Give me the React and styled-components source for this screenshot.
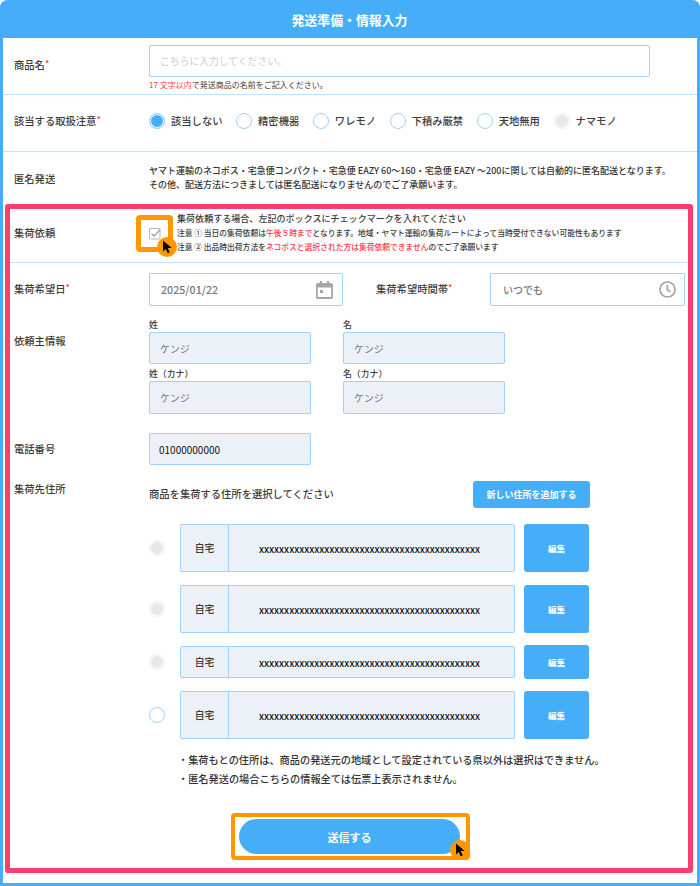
import React from "react";
import styled, { createGlobalStyle } from "styled-components";

const Global = createGlobalStyle`
  html, body { margin: 0; padding: 0; background: #fff; }
  body { font-family: "Noto Sans CJK JP", "Noto Sans", sans-serif; color: #3c3c3c; }
  * { box-sizing: border-box; }
`;

const BLUE = "#46aef9";
const LINE = "#bfe4ff";
const EDGE = "#9dd3fc";
const FILL = "#ecf1f8";
const RED = "#fb3b4e";

const Card = styled.form`
  width: 700px;
  height: 886px;
  margin: 0;
  border: 3px solid ${BLUE};
  border-top: 0;
  border-radius: 8px 8px 0 0;
  display: flex;
  flex-direction: column;
`;
const Header = styled.h1`
  margin: 0 -3px;
  height: 38px;
  flex: none;
  background: ${BLUE};
  border-radius: 8px 8px 0 0;
  color: #fff;
  font-size: 12.9px;
  font-weight: 700;
  display: flex;
  align-items: center;
  justify-content: center;
  padding-right: 1px;
`;
const Row = styled.div`
  display: grid;
  grid-template-columns: 146px 1fr;
  align-items: ${(p) => p.$align || "center"};
  height: ${(p) => p.$h}px;
  padding-top: ${(p) => p.$pt || 0}px;
  border-bottom: ${(p) => (p.$plain ? "0" : `1px solid ${LINE}`)};
  flex: none;
`;
const Label = styled.div`
  padding-left: 11px;
  font-size: 10.3px;
  font-weight: 500;
  line-height: 14px;
  padding-top: ${(p) => p.$top || 0}px;
  padding-bottom: ${(p) => p.$bottom || 0}px;
`;
const Req = styled.span`
  color: ${RED};
  font-size: 9px;
  vertical-align: 2px;
`;
const TextInput = styled.input`
  display: block;
  width: ${(p) => p.$w}px;
  height: ${(p) => p.$h}px;
  border: 1px solid ${EDGE};
  border-radius: 2px;
  background: ${(p) => (p.$fill ? FILL : "#fff")};
  padding: 0 ${(p) => p.$pad || 10}px;
  font: ${(p) => p.$weight || 400} ${(p) => p.$size || 10}px "Noto Sans CJK JP", "Noto Sans", sans-serif;
  color: ${(p) => p.$color || "#777"};
  outline: 0;
  &::placeholder { color: #c9ced3; opacity: 1; }
`;
const Hint = styled.p`
  margin: 2px 0 0;
  font-size: 8px;
  line-height: 12px;
  color: #3c3c3c;
`;
const Red = styled.span`
  color: ${RED};
`;
const Radios = styled.div`
  display: flex;
  gap: 13.6px;
  margin-top: -5px;
`;
const RadioItem = styled.label`
  display: flex;
  align-items: center;
  gap: 6px;
  font-size: 10.3px;
  font-weight: 500;
  line-height: 16px;
`;
const Dot = styled.span`
  display: block;
  flex: none;
  width: 16px;
  height: 16px;
  border-radius: 50%;
  border: 1px solid ${(p) => (p.$state === "off" ? "#f3f3f3" : EDGE)};
  background: ${(p) => (p.$state === "on" ? BLUE : p.$state === "off" ? "#e8e8e8" : "#fff")};
  box-shadow: ${(p) => (p.$state === "on" ? "inset 0 0 0 1px #fff" : p.$state === "off" ? "inset 0 0 0 1px #fbfbfb" : "none")};
`;
const Para = styled.p`
  margin: -1px 0 0;
  font-size: 9px;
  font-weight: 500;
  line-height: 14px;
  color: #333;
`;
const Pickup = styled.section`
  flex: none;
  margin: -1px 4px 0 2px;
  height: 669px;
  border: 5px solid #f93f6e;
  border-radius: 3px;
  display: flex;
  flex-direction: column;
`;
const PickupRow = styled(Row)`
  grid-template-columns: 139px 1fr;
  ${Label} { padding-left: 4px; }
`;
const CheckCell = styled.div`
  position: relative;
  height: 100%;
  padding-left: 28px;
  display: flex;
  flex-direction: column;
  justify-content: center;
`;
const Lead = styled.div`
  font-size: 9.05px;
  font-weight: 500;
  line-height: 14px;
  margin-top: -5px;
`;
const Fine = styled.div`
  font-size: 7.78px;
  font-weight: 500;
  line-height: 14px;
  white-space: nowrap;
`;
const CheckFrame = styled.div`
  position: absolute;
  left: -13px;
  top: 6px;
  width: 37px;
  height: 37px;
  border: 5px solid #ff9800;
  border-radius: 4px;
  display: flex;
  align-items: center;
  justify-content: center;
`;
const CursorBadge = styled.span`
  position: absolute;
  width: 20px;
  height: 20px;
  border-radius: 50%;
  background: #ff9800;
  right: ${(p) => p.$right}px;
  bottom: ${(p) => p.$bottom}px;
  display: flex;
  align-items: center;
  justify-content: center;
`;
const Form = styled.div`
  display: flex;
  flex-direction: column;
  flex: 1;
  min-height: 0;
`;
const Field = styled.div`
  display: grid;
  grid-template-columns: 139px 1fr;
  margin-top: ${(p) => p.$mt || 0}px;
  ${Label} { padding-left: 4px; }
`;
const DateRow = styled.div`
  display: flex;
  align-items: center;
`;
const InlineLabel = styled.div`
  width: 114px;
  margin-left: 33px;
  font-size: 10.3px;
  font-weight: 500;
  line-height: 14px;
  padding-bottom: 2px;
`;
const IconField = styled.div`
  position: relative;
  svg { position: absolute; top: 8px; right: ${(p) => p.$right}px; }
`;
const NameGrid = styled.div`
  display: grid;
  grid-template-columns: 162px 162px;
  column-gap: 32px;
  row-gap: 5px;
`;
const NameCell = styled.div`
  display: flex;
  flex-direction: column;
`;
const Small = styled.span`
  font-size: 8.9px;
  font-weight: 500;
  line-height: 10px;
  height: 12px;
`;
const AddressHead = styled.div`
  width: 441px;
  height: 27px;
  display: flex;
  align-items: center;
  justify-content: space-between;
  font-size: 10.3px;
  font-weight: 500;
`;
const HeadText = styled.span`
  margin-top: -2px;
`;
const AddButton = styled.button`
  width: 117px;
  height: 27px;
  border: 0;
  border-radius: 3px;
  background: ${BLUE};
  color: #fff;
  font: 700 9px "Noto Sans CJK JP", sans-serif;
  padding: 0;
`;
const Addresses = styled.div`
  display: flex;
  flex-direction: column;
  gap: 13px;
  margin-top: 16px;
`;
const AddressRow = styled.div`
  display: flex;
  align-items: center;
  height: ${(p) => p.$h}px;
`;
const AddressBox = styled.div`
  margin-left: 15px;
  width: 335px;
  height: 100%;
  display: flex;
  background: ${FILL};
  border: 1px solid ${EDGE};
  border-radius: 2px;
`;
const AddressTag = styled.div`
  width: 48px;
  flex: none;
  border-right: 1px solid ${EDGE};
  display: flex;
  align-items: center;
  justify-content: center;
  font-size: 9.8px;
  font-weight: 500;
`;
const AddressText = styled.div`
  padding-left: 30px;
  padding-top: 1px;
  display: flex;
  align-items: center;
  font: 500 9.55px "Noto Sans CJK JP", sans-serif;
  color: #111;
`;
const EditButton = styled.button`
  margin-left: 9px;
  width: 65px;
  height: ${(p) => (p.$short ? "34px" : "100%")};
  border: 0;
  border-radius: 3px;
  background: ${BLUE};
  color: #fff;
  font: 700 8.5px "Noto Sans CJK JP", sans-serif;
  padding: 0;
`;
const Notes = styled.ul`
  list-style: none;
  margin: 11px 0 0;
  padding: 0 0 0 29px;
  font-size: 10.2px;
  font-weight: 500;
  line-height: 19px;
  color: #333;
`;
const SubmitFrame = styled.div`
  position: relative;
  align-self: flex-start;
  margin: 25px 0 0 221px;
  width: 239px;
  height: 47px;
  border: 4px solid #ff9800;
  border-radius: 4px;
  padding: 2px 5px 2px 4px;
`;
const SubmitButton = styled.button`
  display: block;
  width: 221px;
  height: 35px;
  border: 0;
  border-radius: 18px;
  background: ${BLUE};
  color: #fff;
  font: 700 11px "Noto Sans CJK JP", sans-serif;
`;

const Cursor = () => (
  <svg width="12" height="14" viewBox="0 0 12 14" aria-hidden="true">
    <path d="M2 0.5v11l2.8-2.6 1.9 4.4 2-0.9-1.9-4.3 3.9-0.2z" fill="#000" />
  </svg>
);
const BoxCheck = () => (
  <svg width="12" height="12" viewBox="0 0 12 12" aria-hidden="true">
    <rect x="0.5" y="0.5" width="10.5" height="10.5" rx="0.5" fill="#fff" stroke="#b5b5b5" />
    <path d="M2.5 5.5l2.5 2.7L11.2 1.5" fill="none" stroke="#8d8d8d" strokeWidth="1.1" />
  </svg>
);
const Calendar = () => (
  <svg width="17" height="18" viewBox="0 0 17 18" aria-hidden="true">
    <path d="M4 0h2v2h5V0h2v2h2c1 0 2 .9 2 2v12c0 1.1-1 2-2 2H2c-1.100 0-2-.9-2-2V4c0-1.100.9-2 2-2h2zM1.800 6.500V16h13.400V6.500z" fill="#a5a5a5" fillRule="evenodd" />
    <rect x="4" y="9" width="3" height="3" fill="#a5a5a5" />
  </svg>
);
const Clock = () => (
  <svg width="17" height="17" viewBox="0 0 17 17" aria-hidden="true" fill="none" stroke="#a5a5a5" strokeWidth="1.700">
    <circle cx="8.500" cy="8.500" r="7.500" />
    <path d="M8.300 3.800v5l3.200 2.200" />
  </svg>
);

const radios = [
  ["該当しない", "on"],
  ["精密機器", "idle"],
  ["ワレモノ", "idle"],
  ["下積み厳禁", "idle"],
  ["天地無用", "idle"],
  ["ナマモノ", "off"],
];
const addresses = [
  { h: 48, state: "off" },
  { h: 48, state: "off" },
  { h: 32, state: "off", short: true },
  { h: 48, state: "idle" },
];
const names = ["姓", "名", "姓（カナ）", "名（カナ）"];
const xs = "x".repeat(44);

export default function App() {
  return (
    <>
      <Global />
      <Card onSubmit={(e) => e.preventDefault()}>
        <Header>発送準備・情報入力</Header>

        <Row $h={57} $align="start" $pt={7}>
          <Label $top={12}>商品名<Req>*</Req></Label>
          <div>
            <TextInput $w={501} $h={32} $size={9.8} placeholder="こちらに入力してください。" readOnly />
            <Hint><Red>17 文字以内</Red>で発送商品の名前をご記入ください。</Hint>
          </div>
        </Row>

        <Row $h={57}>
          <Label $bottom={5}>該当する取扱注意<Req>*</Req></Label>
          <Radios>
            {radios.map(([text, state]) => (
              <RadioItem key={text}><Dot $state={state} />{text}</RadioItem>
            ))}
          </Radios>
        </Row>

        <Row $h={53} $plain>
          <Label>匿名発送</Label>
          <Para>
            ヤマト運輸のネコポス・宅急便コンパクト・宅急便 EAZY 60〜160・宅急便 EAZY 〜200に関しては自動的に匿名配送となります。<br />
            その他、配送方法につきましては匿名配送になりませんのでご了承願います。
          </Para>
        </Row>

        <Pickup>
          <PickupRow $h={54}>
            <Label $bottom={6}>集荷依頼</Label>
            <CheckCell>
              <Lead>集荷依頼する場合、左記のボックスにチェックマークを入れてください</Lead>
              <Fine>注意 ① 当日の集荷依頼は<Red>午後５時まで</Red>となります。地域・ヤマト運輸の集荷ルートによって当時受付できない可能性もあります</Fine>
              <Fine>注意 ② 出品時出荷方法を<Red>ネコポスと選択された方は集荷依頼できません</Red>のでご了承願います</Fine>
              <CheckFrame>
                <BoxCheck />
                <CursorBadge $right={-9} $bottom={-10}><Cursor /></CursorBadge>
              </CheckFrame>
            </CheckCell>
          </PickupRow>

          <Form>
            <Field $mt={10}>
              <Label $top={8}>集荷希望日<Req>*</Req></Label>
              <DateRow>
                <IconField $right={10}>
                  <TextInput $w={194} $h={33} $size={10.7} $color="#777" $pad={11} $weight={500} defaultValue="2025/01/22" readOnly />
                  <Calendar />
                </IconField>
                <InlineLabel>集荷希望時間帯<Req>*</Req></InlineLabel>
                <IconField $right={9}>
                  <TextInput $w={195} $h={33} $pad={12} $weight={500} defaultValue="いつでも" readOnly />
                  <Clock />
                </IconField>
              </DateRow>
            </Field>

            <Field $mt={14}>
              <Label $top={14}>依頼主情報</Label>
              <NameGrid>
                {names.map((n, i) => (
                  <NameCell key={n}>
                    <Small>{n}</Small>
                    <TextInput $fill $w={162} $h={i < 2 ? 32 : 33} defaultValue="ケンジ" readOnly />
                  </NameCell>
                ))}
              </NameGrid>
            </Field>

            <Field $mt={19}>
              <Label $top={9}>電話番号</Label>
              <TextInput $fill $w={162} $h={32} $color="#111" $pad={9} defaultValue="01000000000" readOnly />
            </Field>

            <Field $mt={16}>
              <Label $top={1}>集荷先住所</Label>
              <AddressHead>
                <HeadText>商品を集荷する住所を選択してください</HeadText>
                <AddButton type="button">新しい住所を追加する</AddButton>
              </AddressHead>
            </Field>

            <Field>
              <span />
              <Addresses>
                {addresses.map((a, i) => (
                  <AddressRow key={i} $h={a.h}>
                    <Dot $state={a.state} />
                    <AddressBox>
                      <AddressTag>自宅</AddressTag>
                      <AddressText>{xs}</AddressText>
                    </AddressBox>
                    <EditButton type="button" $short={a.short}>編集</EditButton>
                  </AddressRow>
                ))}
              </Addresses>
            </Field>

            <Field>
              <span />
              <Notes>
                <li>・集荷もとの住所は、商品の発送元の地域として設定されている県以外は選択はできません。</li>
                <li>・匿名発送の場合こちらの情報全ては伝票上表示されません。</li>
              </Notes>
            </Field>

            <SubmitFrame>
              <SubmitButton type="submit">送信する</SubmitButton>
              <CursorBadge $right={-4} $bottom={-4}><Cursor /></CursorBadge>
            </SubmitFrame>
          </Form>
        </Pickup>
      </Card>
    </>
  );
}
